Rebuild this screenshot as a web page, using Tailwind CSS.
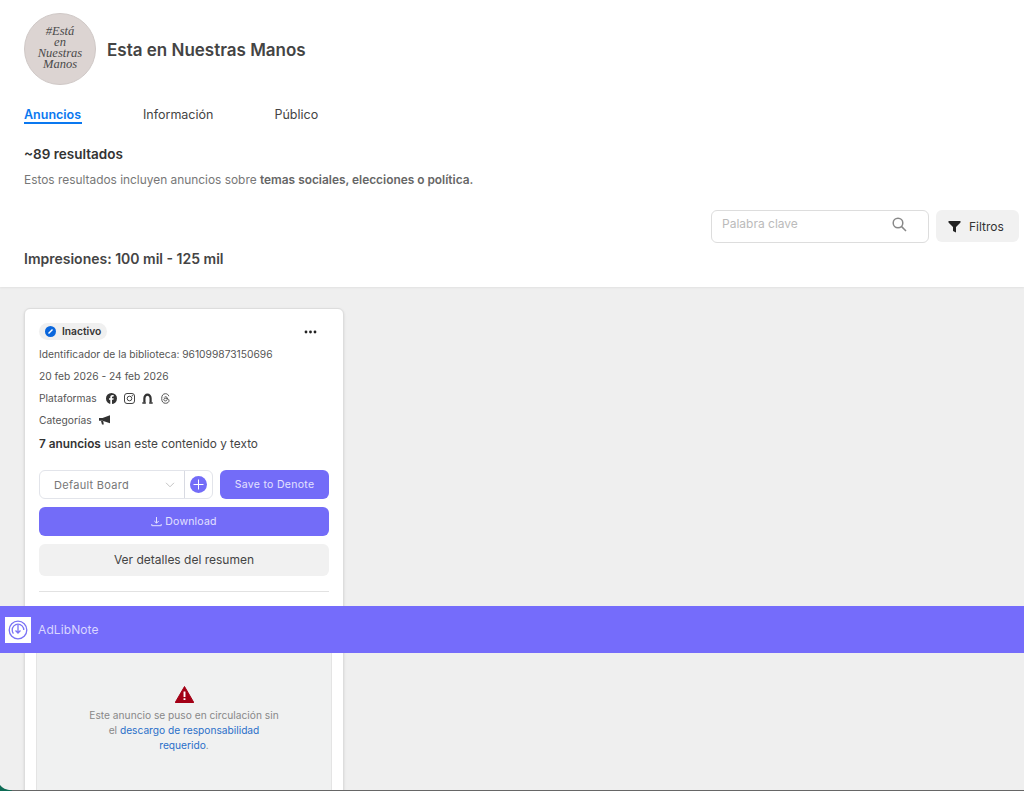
<!DOCTYPE html>
<html lang="es">
<head>
  <meta charset="UTF-8" />
  <title>Esta en Nuestras Manos</title>
  <script src="https://cdn.jsdelivr.net/npm/@tailwindcss/browser@4"></script>
</head>
<body class="relative h-[791px] overflow-hidden bg-[#efefef] font-['Inter','Liberation_Sans',sans-serif] text-[#1c1e21]">
  <!-- Header -->
  <header class="h-[287px] bg-white pl-6 pr-[5px] pt-[13px] shadow-[0_1px_2px_rgba(0,0,0,0.06)]">
    <div class="flex items-center gap-[11px]">
      <div class="flex h-[72px] w-[72px] items-center justify-center rounded-full border border-[#cfc8c6] bg-[#dcd4d2] pb-[2px]">
        <p class="text-center font-['Liberation_Serif',serif] text-[12.5px] italic leading-[11px] text-[#4a4a4a]">#Está<br>en<br>Nuestras<br>Manos</p>
      </div>
      <h1 class="mt-1 text-[17px] font-semibold text-[#444444]">Esta en Nuestras Manos</h1>
    </div>
    <nav class="mt-[21px] flex h-[18px] gap-[61px] pl-0 text-[12.5px] leading-4 text-[#444444]">
      <a class="w-[58px] border-b-2 border-[#0a78f0] pt-px font-semibold text-[#0a78f0]">Anuncios</a>
      <a class="pt-px">Información</a>
      <a class="pt-px">Público</a>
    </nav>
    <p class="mt-5 text-[13.5px] leading-5 font-semibold text-[#333333]">~89 resultados</p>
    <p class="mt-[6px] text-[11.9px] leading-5 text-[#777777]">Estos resultados incluyen anuncios sobre <b class="font-semibold text-[#666666]">temas sociales, elecciones o política.</b></p>
    <div class="mt-5 flex justify-end gap-[7px]">
      <div class="flex h-[33px] w-[218px] items-start justify-between rounded-md border border-[#dddddd] pl-[10px] pr-[21px] pt-[5px] text-[12px] leading-4 text-[#bbbbbb]">
        <span>Palabra clave</span>
        <svg class="mt-[1px]" width="15" height="15" viewBox="0 0 15 15" fill="none" stroke="#888888" stroke-width="1.5"><circle cx="6" cy="6" r="4.8"/><path d="M9.6 9.6 14 14"/></svg>
      </div>
      <button class="flex h-8 w-[83px] items-center gap-[8px] rounded-md bg-[#f1f1f1] pl-[12px] pt-px text-[12px] text-[#333333]">
        <svg width="13" height="13" viewBox="0 0 13 13" fill="#222222"><path d="M.5 1h12v1.6L8 7v5.5L5 11V7L.5 2.6z"/></svg>
        Filtros
      </button>
    </div>
    <p class="mt-[6px] text-[14px] leading-5 font-semibold text-[#444444]">Impresiones: 100 mil - 125 mil</p>
  </header>

  <!-- Tarjeta -->
  <main class="pl-6 pt-[21px]">
    <article class="w-[320px] rounded-md border border-[#dddddd] bg-white px-[14px] pt-[14px] pb-10 shadow-sm">
      <div class="flex items-center justify-between pr-[12px]">
        <span class="flex h-[17px] items-center gap-[6px] rounded-full bg-[#f0f0f0] pl-[6px] pr-[6px] text-[10.25px] font-semibold text-[#333333]">
          <svg width="11" height="11" viewBox="0 0 11 11"><circle cx="5.5" cy="5.5" r="5.5" fill="#0a66dc"/><path d="M3.5 7.5 7.5 3.5" stroke="#ffffff" stroke-width="1.5"/></svg>
          Inactivo
        </span>
        <svg width="13" height="4" viewBox="0 0 13 4" fill="#222222"><circle cx="2" cy="2" r="1.4"/><circle cx="6.5" cy="2" r="1.4"/><circle cx="11" cy="2" r="1.4"/></svg>
      </div>
      <div class="mt-[3px] flex flex-col text-[10.25px] leading-[22px] text-[#555555]">
        <p>Identificador de la biblioteca: 961099873150696</p>
        <p>20 feb 2026 - 24 feb 2026</p>
        <p class="flex items-center gap-[9px]">Plataformas
          <span class="flex items-center gap-[7px]">
            <svg width="11" height="11" viewBox="0 0 11 11"><circle cx="5.5" cy="5.5" r="5.5" fill="#333333"/><path d="M6 11V6.8h1.4l.3-1.6H6V4.3c0-.6.3-.9.9-.9h.8V2a6 6 0 0 0-1.2-.1C5.2 1.9 4.3 2.700 4.3 4.100v1.100H3v1.600h1.300V11z" fill="#ffffff"/></svg>
            <svg width="11" height="11" viewBox="0 0 11 11" fill="none" stroke="#444444"><rect x=".5" y=".5" width="10" height="10" rx="2.5"/><circle cx="5.5" cy="5.5" r="2.3"/><circle cx="8.3" cy="2.7" r=".3"/></svg>
            <svg width="11" height="11" viewBox="0 0 11 11" fill="none" stroke="#333333" stroke-width="2.2"><path d="M2.4 9.5V5.200a3.100 3.600 0 0 1 6.200 0v4.300"/><path d="M.3 9.900h3.500M7.200 9.900h3.500" stroke-width="1.500"/></svg>
            <svg width="11" height="11" viewBox="0 0 11 11" fill="none" stroke="#555555"><path d="M8.800 3.200C8.300 1.500 7 .7 5.500.7 3 .7 1.700 2.500 1.700 5.500s1.300 4.800 3.800 4.800c2 0 3.500-1.100 3.500-2.600 0-1.600-1.400-2.500-3.200-2.500-1.200 0-2 .5-2 1.400 0 .8.700 1.300 1.600 1.300 1.200 0 1.900-.8 1.900-2.200 0-1.300-.7-2-1.700-2-.7 0-1.200.3-1.500.8"/></svg>
          </span>
        </p>
        <p class="flex items-center gap-[7px]">Categorías
          <svg width="12" height="10" viewBox="0 0 12 10" fill="#333333"><path d="M0 3h3.500L11 .3v8L3.500 5.800H0z"/><path d="M2 6h2.200l.6 3.500H3z"/></svg>
        </p>
      </div>
      <p class="mt-px text-[11.8px] leading-6 text-[#444444]"><b class="font-semibold text-[#333333]">7 anuncios</b> usan este contenido y texto</p>

      <div class="mt-[14px] flex gap-[7px]">
        <div class="flex h-[29px] w-[174px] rounded-md border border-[#e2e4ea] text-[11px] text-[#777777]">
          <div class="flex flex-1 items-center justify-between pl-[14px] pr-[9px] pt-px tracking-[0.3px]">
            Default Board
            <svg width="10" height="6" viewBox="0 0 10 6" fill="none" stroke="#c4c4c4"><path d="m1 .8 4 4 4-4"/></svg>
          </div>
          <div class="flex w-[28px] items-center justify-center border-l border-[#d8dae2]">
            <svg width="17" height="17" viewBox="0 0 17 17"><circle cx="8.5" cy="8.5" r="8.5" fill="#736cf8"/><path d="M8.500 3.500v10M3.500 8.500h10" stroke="#ffffff"/></svg>
          </div>
        </div>
        <button class="h-[29px] w-[109px] rounded-md bg-[#736cf8] text-[10.5px] tracking-[0.3px] text-[#e4e2ff]">Save to Denote</button>
      </div>
      <button class="mt-[8px] flex h-[29px] w-full items-center justify-center gap-[3px] rounded-md bg-[#736cf8] text-[10.5px] tracking-[0.2px] text-[#e4e2ff]">
        <svg width="11" height="11" viewBox="0 0 11 11" fill="none" stroke="#e4e2ff"><path d="M5.500 1v6M3.300 5l2.200 2.200L7.700 5M.8 8v1.700h9.400V8"/></svg>
        Download
      </button>
      <button class="mt-[8px] h-[32px] w-full rounded-md bg-[#f1f1f1] text-[12px] text-[#444444]">Ver detalles del resumen</button>
      <div class="mt-[15px] border-t border-[#e2e2e2]"></div>

      <div class="-mx-[3px] mt-[14px] h-[200px] overflow-hidden border border-[#e4e4e4] bg-[#f0f1f1] pt-[79px] text-center text-[10.2px] leading-[15px] text-[#888888]">
        <svg class="mx-auto" width="19" height="17" viewBox="0 0 19 17"><path d="M9.500 .5 18.800 16.500H.2z" fill="#a30016" stroke="#a30016" stroke-linejoin="round"/><path d="M9.500 5.500v5.500M9.500 12.300v1.800" stroke="#ffffff" stroke-width="1.900"/></svg>
        <p class="mt-[5px]">Este anuncio se puso en circulación sin</p>
        <p>el <a class="text-[#2a6fc9]">descargo de responsabilidad</a></p>
        <p><a class="text-[#2a6fc9]">requerido</a>.</p>
      </div>
    </article>
  </main>

  <!-- Barra AdLibNote -->
  <div class="absolute inset-x-0 top-[606px] flex h-[47px] items-center gap-[7px] bg-[#756cfb] pl-[5px]">
    <div class="flex h-[26px] w-[26px] items-center justify-center bg-white">
      <svg width="20" height="20" viewBox="0 0 20 20" fill="none" stroke="#7a72f5" stroke-width="1.300"><circle cx="10" cy="10" r="8.800"/><circle cx="10" cy="10" r="5.800" stroke-dasharray="22 14.500" stroke-dashoffset="-14"/><path d="M10 5v8M7.500 10.500l2.500 2.500 2.500-2.500"/></svg>
    </div>
    <span class="text-[12px] tracking-[0.1px] text-[#d9d6ff]">AdLibNote</span>
  </div>

  <!-- Borde inferior -->
  <div class="absolute inset-x-0 bottom-0 h-px bg-[#666666]"></div>
  <svg class="absolute bottom-0 left-0" width="12" height="6" viewBox="0 0 12 6" fill="#0d6b55"><path d="M0 0C2 3 6 5 12 5.500V6H0z"/></svg>
</body>
</html>
